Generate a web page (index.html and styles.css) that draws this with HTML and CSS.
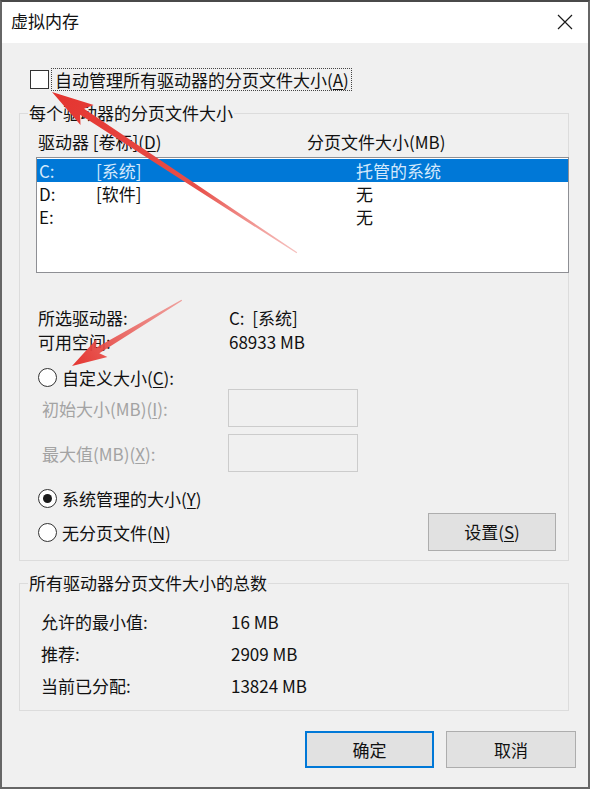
FILE: index.html
```html
<!DOCTYPE html>
<html lang="zh-CN">
<head>
<meta charset="utf-8">
<title>虚拟内存</title>
<link rel="stylesheet" href="styles.css">
</head>
<body>
<div class="window">
  <div class="titlebar">
    <span class="title">虚拟内存</span>
    <svg class="close" width="16" height="16" viewBox="0 0 16 16"><path d="M1 1 L15 15 M15 1 L1 15" stroke="#1a1a1a" stroke-width="1.2" fill="none"/></svg>
  </div>
  <div class="content">
    <div class="auto-row">
      <span class="checkbox"></span>
      <span class="focus-label">自动管理所有驱动器的分页文件大小(<u>A</u>)</span>
    </div>

    <fieldset class="group group-drives">
      <legend>每个驱动器的分页文件大小</legend>
      <div class="list-header">
        <span class="col-drive">驱动器 [卷标](<u>D</u>)</span>
        <span>分页文件大小(MB)</span>
      </div>
      <div class="listbox">
        <div class="list-row selected"><span class="c-letter">C:</span><span class="c-label">[系统]</span><span>托管的系统</span></div>
        <div class="list-row"><span class="c-letter">D:</span><span class="c-label">[软件]</span><span>无</span></div>
        <div class="list-row"><span class="c-letter">E:</span><span class="c-label"></span><span>无</span></div>
      </div>

      <div class="info">
        <div class="info-row"><span class="info-label">所选驱动器:</span><span>C:&nbsp; [系统]</span></div>
        <div class="info-row"><span class="info-label">可用空间:</span><span>68933 MB</span></div>
      </div>

      <div class="radio-row radio-custom"><span class="radio"></span><span>自定义大小(<u>C</u>):</span></div>
      <div class="input-row"><span class="input-label">初始大小(MB)(<u>I</u>):</span><span class="textbox"></span></div>
      <div class="input-row second"><span class="input-label">最大值(MB)(<u>X</u>):</span><span class="textbox"></span></div>

      <div class="radio-row radio-system"><span class="radio checked"></span><span>系统管理的大小(<u>Y</u>)</span></div>
      <div class="radio-none-row">
        <div class="radio-row"><span class="radio"></span><span>无分页文件(<u>N</u>)</span></div>
        <button class="btn btn-set">设置(<u>S</u>)</button>
      </div>
    </fieldset>

    <fieldset class="group group-total">
      <legend>所有驱动器分页文件大小的总数</legend>
      <div class="total-row first"><span class="total-label">允许的最小值:</span><span>16 MB</span></div>
      <div class="total-row"><span class="total-label">推荐:</span><span>2909 MB</span></div>
      <div class="total-row"><span class="total-label">当前已分配:</span><span>13824 MB</span></div>
    </fieldset>

    <div class="footer">
      <button class="btn btn-ok">确定</button>
      <button class="btn btn-cancel">取消</button>
    </div>
  </div>

  <svg class="arrows" width="590" height="789" viewBox="0 0 590 789">
    <defs>
      <linearGradient id="g1" gradientUnits="userSpaceOnUse" x1="0" y1="0" x2="293" y2="0">
        <stop offset="0" stop-color="#e4342f"/>
        <stop offset="0.6" stop-color="#e8504a"/>
        <stop offset="1" stop-color="#f09a96" stop-opacity="0.6"/>
      </linearGradient>
      <linearGradient id="g2" gradientUnits="userSpaceOnUse" x1="0" y1="0" x2="128" y2="0">
        <stop offset="0" stop-color="#e4342f"/>
        <stop offset="1" stop-color="#ee7e79" stop-opacity="0.7"/>
      </linearGradient>
    </defs>
    <g transform="translate(52 92) rotate(33.3)">
      <polygon fill="url(#g1)" points="0,0 42,-12 36,-3.6 293,-0.6 293,0.6 36,3.6 42,12"/>
    </g>
    <g transform="translate(72 366) rotate(-30.96)">
      <polygon fill="url(#g2)" points="0,0 35,-10.5 30,-3.2 128,-0.6 128,0.6 30,3.2 35,10.5"/>
    </g>
  </svg>
</div>
</body>
</html>
```

FILE: styles.css
```css
* { box-sizing: border-box; }

html, body {
  margin: 0;
  padding: 0;
  background: #f0f0f0;
}

body {
  font-family: "Noto Sans CJK SC", "Noto Sans", sans-serif;
  font-size: 17px;
  color: #111;
}

u { text-decoration: underline; text-underline-offset: 2px; }

.window {
  position: relative;
  width: 590px;
  height: 789px;
  border: 2px solid #666;
  border-top-color: #4a4a4a;
  background: #f0f0f0;
  overflow: hidden;
}

.titlebar {
  height: 41px;
  background: #fff;
  display: flex;
  align-items: center;
  justify-content: space-between;
  padding: 0 15px 0 9px;
}

.title {
  font-size: 17px;
  line-height: 24px;
  margin-top: -3px;
}

.close { display: block; margin-top: -2px; }

.content {
  padding: 0 19px 0 17px;
}

.auto-row {
  display: flex;
  align-items: center;
  margin-top: 25px;
  height: 23px;
}

.checkbox {
  width: 19px;
  height: 19px;
  border: 1px solid #333;
  background: #fff;
  margin-left: 11px;
  margin-right: 2px;
}

.focus-label {
  border: 1px dotted #444;
  height: 23px;
  line-height: 21px;
  padding: 0 2px 0 3px;
}

.group {
  margin: 0;
  padding: 0;
  min-inline-size: 0;
  border: 1px solid #dcdcdc;
}

.group legend {
  margin-left: 8px;
  padding: 0 1px;
  line-height: 24px;
  font-size: 17px;
}

.group-drives {
  margin-top: 10px;
  padding-bottom: 9px;
}

.list-header {
  display: flex;
  height: 22px;
  line-height: 22px;
  margin-top: 6px;
  padding-left: 18px;
}

.col-drive { width: 269px; }

.listbox {
  margin: 4px -1px 0 16px;
  height: 116px;
  border: 1px solid #8e8f94;
  background: #fff;
  padding-top: 1px;
}

.list-row {
  display: flex;
  height: 23px;
  line-height: 23px;
  padding-left: 2px;
}

.list-row.selected {
  background: #0078d7;
  color: #d4e9fc;
}

.c-letter { width: 57px; }
.c-label { width: 260px; }

.info {
  margin-top: 33px;
}

.info-row {
  display: flex;
  height: 24px;
  line-height: 24px;
  padding-left: 18px;
}

.info-label { width: 191px; }

.radio-row {
  display: flex;
  align-items: center;
  height: 23px;
  line-height: 23px;
  padding-left: 18px;
}

.radio {
  width: 19px;
  height: 19px;
  border: 1px solid #333;
  border-radius: 50%;
  background: #fff;
  margin-right: 5px;
  display: flex;
  align-items: center;
  justify-content: center;
}

.radio.checked::after {
  content: "";
  width: 9px;
  height: 9px;
  border-radius: 50%;
  background: #1a1a1a;
}

.radio-custom { margin-top: 12px; }

.input-row {
  display: flex;
  align-items: center;
  height: 38px;
  padding-left: 22px;
  color: #a3a3a3;
}

.input-row.second { margin-top: 7px; }

.input-label { width: 186px; }

.textbox {
  width: 130px;
  height: 38px;
  border: 1px solid #cccccc;
  background: #f0f0f0;
}

.radio-system { margin-top: 15px; }

.radio-none-row {
  display: flex;
  align-items: center;
  justify-content: space-between;
  height: 38px;
  margin-top: 3px;
  padding-right: 12px;
}

.btn {
  font-family: inherit;
  font-size: 17px;
  color: #111;
  background: #e1e1e1;
  border: 1px solid #adadad;
  height: 38px;
  padding: 0;
  line-height: 34px;
}

.btn-set { width: 128px; }

.group-total {
  margin-top: 10px;
  padding-bottom: 8px;
}

.total-row {
  display: flex;
  height: 32px;
  line-height: 32px;
  padding-left: 21px;
}

.total-row.first { margin-top: 11px; }

.total-label { width: 190px; }

.footer {
  display: flex;
  justify-content: flex-end;
  gap: 12px;
  margin-top: 20px;
  margin-right: -7px;
}

.btn-ok {
  width: 129px;
  height: 37px;
  border: 2px solid #0078d7;
}

.btn-cancel {
  width: 130px;
  height: 37px;
}

.arrows {
  position: absolute;
  left: -2px;
  top: -2px;
  pointer-events: none;
}
```
